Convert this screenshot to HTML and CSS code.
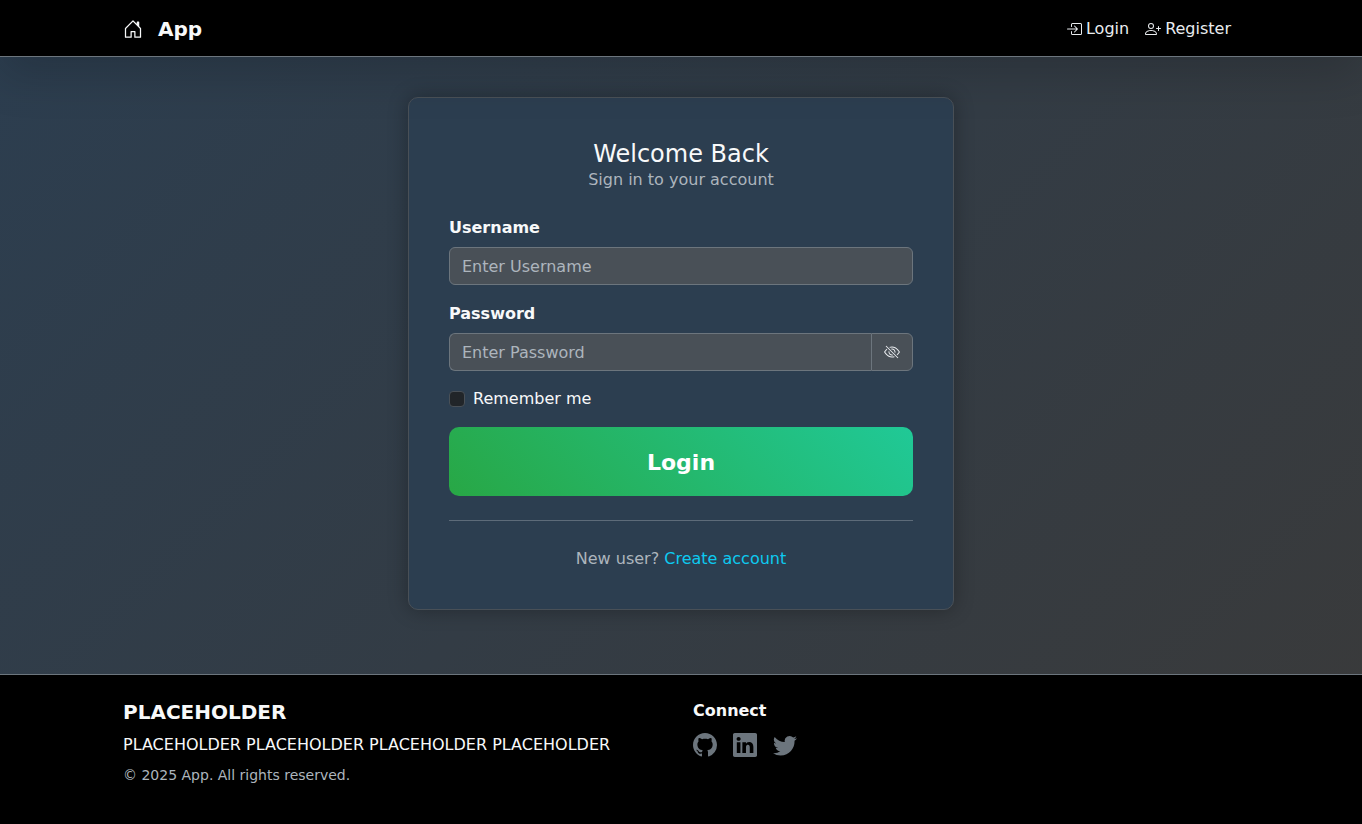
FILE: index.html
```html
<!DOCTYPE html>
<html lang="en">
<head>
<meta charset="utf-8">
<meta name="viewport" content="width=device-width, initial-scale=1">
<title>Login - App</title>
<link rel="stylesheet" href="styles.css">
</head>
<body>
<header class="site-header">
  <nav class="container navbar">
    <a class="brand" href="#">
      <svg class="brand-icon" viewBox="0 0 16 16" aria-hidden="true"><path d="M8.354 1.146a.5.5 0 0 0-.708 0l-6 6A.5.5 0 0 0 1.5 7.5v7a.5.5 0 0 0 .5.5h4.5a.5.5 0 0 0 .5-.5v-4h2v4a.5.5 0 0 0 .5.5H14a.5.5 0 0 0 .5-.5v-7a.5.5 0 0 0-.146-.354L13 5.793V2.5a.5.5 0 0 0-.5-.5h-1a.5.5 0 0 0-.5.5v1.293zM2.5 14V7.707l5.5-5.5 5.5 5.5V14H10v-4a.5.5 0 0 0-.5-.5h-3a.5.5 0 0 0-.5.5v4z"/></svg>
      <span>App</span>
    </a>
    <div class="nav-links">
      <a class="nav-link" href="#">
        <svg class="icon" viewBox="0 0 16 16" aria-hidden="true"><path fill-rule="evenodd" d="M6 3.5a.5.5 0 0 1 .5-.5h8a.5.5 0 0 1 .5.5v9a.5.5 0 0 1-.5.5h-8a.5.5 0 0 1-.5-.5v-2a.5.5 0 0 0-1 0v2A1.5 1.5 0 0 0 6.5 14h8a1.5 1.5 0 0 0 1.5-1.5v-9A1.5 1.5 0 0 0 14.5 2h-8A1.5 1.5 0 0 0 5 3.5v2a.5.5 0 0 0 1 0z"/><path fill-rule="evenodd" d="M11.854 8.354a.5.5 0 0 0 0-.708l-3-3a.5.5 0 1 0-.708.708L10.293 7.5H1.5a.5.5 0 0 0 0 1h8.793l-2.147 2.146a.5.5 0 0 0 .708.708z"/></svg>
        <span>Login</span>
      </a>
      <a class="nav-link" href="#">
        <svg class="icon" viewBox="0 0 16 16" aria-hidden="true"><path d="M6 8a3 3 0 1 0 0-6 3 3 0 0 0 0 6m2-3a2 2 0 1 1-4 0 2 2 0 0 1 4 0m4 8c0 1-1 1-1 1H1s-1 0-1-1 1-4 6-4 6 3 6 4m-1-.004c-.001-.246-.154-.986-.832-1.664C9.516 10.68 8.289 10 6 10s-3.516.68-4.168 1.332c-.678.678-.83 1.418-.832 1.664z"/><path fill-rule="evenodd" d="M13.5 5a.5.5 0 0 1 .5.5V7h1.5a.5.5 0 0 1 0 1H14v1.5a.5.5 0 0 1-1 0V8h-1.5a.5.5 0 0 1 0-1H13V5.5a.5.5 0 0 1 .5-.5"/></svg>
        <span>Register</span>
      </a>
    </div>
  </nav>
</header>

<main class="container page-main">
  <section class="card">
    <h1 class="card-title">Welcome Back</h1>
    <p class="card-subtitle">Sign in to your account</p>
    <form class="login-form">
      <div class="field">
        <label class="field-label" for="username">Username</label>
        <input class="input" id="username" type="text" placeholder="Enter Username">
      </div>
      <div class="field">
        <label class="field-label" for="password">Password</label>
        <div class="input-group">
          <input class="input input-joined" id="password" type="password" placeholder="Enter Password">
          <button class="toggle" type="button" aria-label="Show password">
            <svg class="icon" viewBox="0 0 16 16" aria-hidden="true"><path d="M13.359 11.238C15.06 9.72 16 8 16 8s-3-5.5-8-5.5a7 7 0 0 0-2.79.588l.77.771A6 6 0 0 1 8 3.5c2.12 0 3.879 1.168 5.168 2.457A13 13 0 0 1 14.828 8q-.086.13-.195.288c-.335.48-.83 1.12-1.465 1.755q-.247.248-.517.486z"/><path d="M11.297 9.176a3.5 3.5 0 0 0-4.474-4.474l.823.823a2.5 2.5 0 0 1 2.829 2.829zm-2.943 1.299.822.822a3.5 3.5 0 0 1-4.474-4.474l.823.823a2.5 2.5 0 0 0 2.829 2.829"/><path d="M3.35 5.47q-.27.24-.518.487A13 13 0 0 0 1.172 8l.195.288c.335.48.83 1.12 1.465 1.755C4.121 11.332 5.881 12.5 8 12.5c.716 0 1.39-.133 2.02-.36l.77.772A7 7 0 0 1 8 13.5C3 13.5 0 8 0 8s.939-1.721 2.641-3.238l.708.709zm10.296 8.884-12-12 .708-.708 12 12z"/></svg>
          </button>
        </div>
      </div>
      <div class="check">
        <input class="check-box" id="remember" type="checkbox">
        <label for="remember">Remember me</label>
      </div>
      <button class="submit" type="submit">Login</button>
    </form>
    <hr class="divider">
    <p class="signup">New user? <a class="signup-link" href="#">Create account</a></p>
  </section>
</main>

<footer class="site-footer">
  <div class="container footer-grid">
    <div>
      <h2 class="footer-title">PLACEHOLDER</h2>
      <p class="footer-text">PLACEHOLDER PLACEHOLDER PLACEHOLDER PLACEHOLDER</p>
      <p class="copyright">© 2025 App. All rights reserved.</p>
    </div>
    <div>
      <h3 class="connect-title">Connect</h3>
      <div class="socials">
        <a class="social" href="#" aria-label="GitHub"><svg class="social-icon" viewBox="0 0 16 16" aria-hidden="true"><path d="M8 0C3.58 0 0 3.58 0 8c0 3.54 2.29 6.53 5.47 7.59.4.07.55-.17.55-.38 0-.19-.01-.82-.01-1.49-2.01.37-2.53-.49-2.69-.94-.09-.23-.48-.94-.82-1.13-.28-.15-.68-.52-.01-.53.63-.01 1.08.58 1.23.82.72 1.21 1.87.87 2.33.66.07-.52.28-.87.51-1.07-1.78-.2-3.64-.89-3.64-3.95 0-.87.31-1.59.82-2.15-.08-.2-.36-1.02.08-2.12 0 0 .67-.21 2.2.82.64-.18 1.32-.27 2-.27s1.36.09 2 .27c1.53-1.04 2.2-.82 2.2-.82.44 1.1.16 1.92.08 2.12.51.56.82 1.27.82 2.15 0 3.07-1.87 3.75-3.65 3.95.29.25.54.73.54 1.48 0 1.07-.01 1.93-.01 2.2 0 .21.15.46.55.38A8.01 8.01 0 0 0 16 8c0-4.42-3.58-8-8-8"/></svg></a>
        <a class="social" href="#" aria-label="LinkedIn"><svg class="social-icon" viewBox="0 0 16 16" aria-hidden="true"><path d="M0 1.146C0 .513.526 0 1.175 0h13.65C15.474 0 16 .513 16 1.146v13.708c0 .633-.526 1.146-1.175 1.146H1.175C.526 16 0 15.487 0 14.854zm4.943 12.248V6.169H2.542v7.225zm-1.2-8.212c.837 0 1.358-.554 1.358-1.248-.015-.709-.52-1.248-1.342-1.248S2.4 3.226 2.4 3.934c0 .694.521 1.248 1.327 1.248zm4.908 8.212V9.359c0-.216.016-.432.08-.586.173-.431.568-.878 1.232-.878.869 0 1.216.662 1.216 1.634v3.865h2.401V9.25c0-2.22-1.184-3.252-2.764-3.252-1.274 0-1.845.7-2.165 1.193v.025h-.016l.016-.025V6.169h-2.4c.03.678 0 7.225 0 7.225z"/></svg></a>
        <a class="social" href="#" aria-label="Twitter"><svg class="social-icon" viewBox="0 0 16 16" aria-hidden="true"><path d="M5.026 15c6.038 0 9.341-5.003 9.341-9.334q.002-.211-.006-.422A6.7 6.7 0 0 0 16 3.542a6.7 6.7 0 0 1-1.889.518 3.3 3.3 0 0 0 1.447-1.817 6.5 6.5 0 0 1-2.087.793A3.286 3.286 0 0 0 7.875 6.03a9.32 9.32 0 0 1-6.767-3.429 3.29 3.29 0 0 0 1.018 4.382A3.3 3.3 0 0 1 .64 6.575v.045a3.29 3.29 0 0 0 2.632 3.218 3.2 3.2 0 0 1-.865.115 3 3 0 0 1-.614-.057 3.28 3.28 0 0 0 3.067 2.277A6.6 6.6 0 0 1 .78 13.58a6 6 0 0 1-.78-.045A9.34 9.34 0 0 0 5.026 15"/></svg></a>
      </div>
    </div>
  </div>
</footer>
</body>
</html>
```
FILE: styles.css
```css
*, *::before, *::after { box-sizing: border-box; }

body {
  margin: 0;
  min-height: 100vh;
  display: flex;
  flex-direction: column;
  font-family: "DejaVu Sans", sans-serif;
  font-size: 16px;
  line-height: 24px;
  color: #f8f9fa;
  background: linear-gradient(135deg, #2c3e50, #3a3a3a);
}

h1, h2, h3, p { margin: 0; }
a { color: inherit; text-decoration: none; }

.container {
  width: 100%;
  max-width: 1140px;
  margin: 0 auto;
  padding: 0 12px;
}

.site-header {
  position: relative;
  z-index: 1;
  background: #000;
  border-bottom: 1px solid #6c757d;
  box-shadow: 0 16px 48px rgba(0, 0, 0, 0.175);
}
.navbar {
  display: flex;
  align-items: center;
  justify-content: space-between;
  padding-top: 9px;
  padding-bottom: 7px;
}
.brand {
  display: flex;
  align-items: center;
  gap: 15px;
  font-size: 20px;
  font-weight: 700;
}
.brand-icon { width: 20px; height: 20px; fill: currentColor; }
.nav-links { display: flex; }
.nav-link {
  display: flex;
  align-items: center;
  gap: 4px;
  padding: 8px;
  color: #e9ecef;
}
.icon { width: 16px; height: 16px; fill: currentColor; display: block; }

.page-main {
  flex: 1 0 auto;
  display: flex;
  justify-content: center;
  align-items: flex-start;
  padding-top: 40px;
  padding-bottom: 64px;
}
.card {
  width: 100%;
  max-width: 546px;
  padding: 42px 40px 38px;
  background: #2c3e50;
  border: 1px solid #495057;
  border-radius: 10px;
  box-shadow: 0 0 20px rgba(0, 0, 0, 0.3);
}
.card-title {
  font-size: 24px;
  line-height: 28px;
  font-weight: 400;
  text-align: center;
}
.card-subtitle { text-align: center; color: #adb5bd; margin-bottom: 24px; }

.login-form { display: flex; flex-direction: column; gap: 16px; }
.field { display: flex; flex-direction: column; gap: 7px; }
.field + .field { margin-top: 1px; }
.field-label { font-weight: 700; }
.input {
  width: 100%;
  min-width: 0;
  height: 38px;
  padding: 6px 12px;
  font: inherit;
  color: #f8f9fa;
  background: #495057;
  border: 1px solid #6c757d;
  border-radius: 6px;
}
.input::placeholder { color: #adb5bd; opacity: 1; }
.input-group { display: flex; }
.input-joined {
  flex: 1;
  border-right: 0;
  border-radius: 6px 0 0 6px;
}
.toggle {
  padding: 0 12px;
  color: #e9ecef;
  background: #495057;
  border: 1px solid #6c757d;
  border-radius: 0 6px 6px 0;
}
.check { display: flex; align-items: center; gap: 8px; }
.check-box {
  appearance: none;
  width: 16px;
  height: 16px;
  margin: 0;
  background: #212529;
  border: 1px solid #495057;
  border-radius: 4px;
}
.check-box:checked { background: #20c997; }
.submit {
  padding: 19px 18px 17px;
  font-family: inherit;
  font-size: 22px;
  line-height: 33px;
  font-weight: 700;
  color: #fff;
  background: linear-gradient(45deg, #28a745, #20c997);
  border: 0;
  border-radius: 10px;
}
.divider {
  margin: 24px 0 26px;
  border: 0;
  border-top: 1px solid #5d6b79;
}
.signup { text-align: center; color: #adb5bd; }
.signup-link { color: #0dcaf0; }

.site-footer {
  padding: 25px 0 38px;
  background: #000;
  border-top: 1px solid #6c757d;
}
.footer-grid {
  display: grid;
  grid-template-columns: 1fr 1fr;
  gap: 24px;
}
.footer-title { font-size: 20px; line-height: 24px; margin-bottom: 9px; }
.footer-text { margin-bottom: 8px; }
.copyright { font-size: 14px; line-height: 21px; color: #adb5bd; }
.connect-title { font-size: 16px; line-height: 22px; margin-bottom: 5px; }
.socials { display: flex; gap: 16px; padding: 6px 0; }
.social { color: #6c757d; }
.social-icon { display: block; width: 24px; height: 24px; fill: currentColor; }
```
